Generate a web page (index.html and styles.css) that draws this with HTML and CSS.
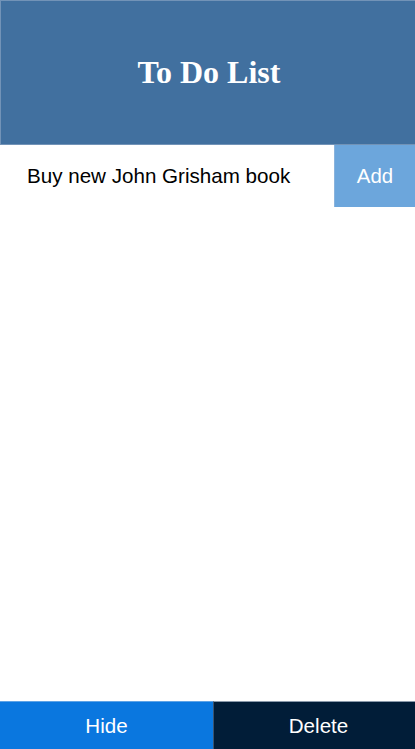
FILE: index.html
```html
<!DOCTYPE html>
<html>
<head>
<meta charset="utf-8">
<link rel="stylesheet" href="styles.css">
</head>
<body>
<div class="app">
  <header class="header"><h1 class="title">To Do List</h1></header>
  <div class="entry">
    <input class="entry-input" type="text" value="Buy new John Grisham book">
    <button class="add-btn">Add</button>
  </div>
  <ul class="list"></ul>
  <div class="footer">
    <button class="foot-btn hide-btn">Hide</button>
    <button class="foot-btn delete-btn">Delete</button>
  </div>
</div>
</body>
</html>
```
FILE: styles.css
```css
html, body { margin: 0; padding: 0; }
body { font-family: "Liberation Sans", Arial, sans-serif; }
.app { display: flex; flex-direction: column; height: 100vh; }
.header {
  background: #41709f;
  border: 1px solid #7293b7;
  border-right: none;
  height: 143px;
  display: flex;
  align-items: center;
  justify-content: center;
}
.title {
  margin: 0 0 0 2px;
  color: #fff;
  font-family: "Liberation Serif", "Times New Roman", serif;
  font-size: 32px;
  font-weight: bold;
}
.entry { display: flex; height: 62px; }
.entry-input {
  flex: 1;
  border: none;
  outline: none;
  padding: 0 0 0 27px;
  font-family: "Liberation Sans", Arial, sans-serif;
  font-size: 20.6px;
  color: #000;
  min-width: 0;
}
.add-btn {
  width: 81px;
  border: none;
  border-left: 1px solid #8ab3dc;
  background: #6ca6dc;
  color: #fff;
  font-family: "Liberation Sans", Arial, sans-serif;
  font-size: 20.4px;
  padding: 0;
}
.list { flex: 1; margin: 0; padding: 0; list-style: none; }
.footer { display: flex; height: 48px; }
.foot-btn {
  border: none;
  border-top: 1px solid #a9b9cb;
  padding: 0;
  color: #fff;
  font-family: "Liberation Sans", Arial, sans-serif;
  font-size: 20.6px;
}
.hide-btn { width: 213px; background: #0a77df; border-top-color: #5ea3e6; }
.delete-btn { flex: 1; background: #011d38; border-left: 1px solid #3a5470; border-top-color: #8a9aab; padding-left: 8px; }
```
